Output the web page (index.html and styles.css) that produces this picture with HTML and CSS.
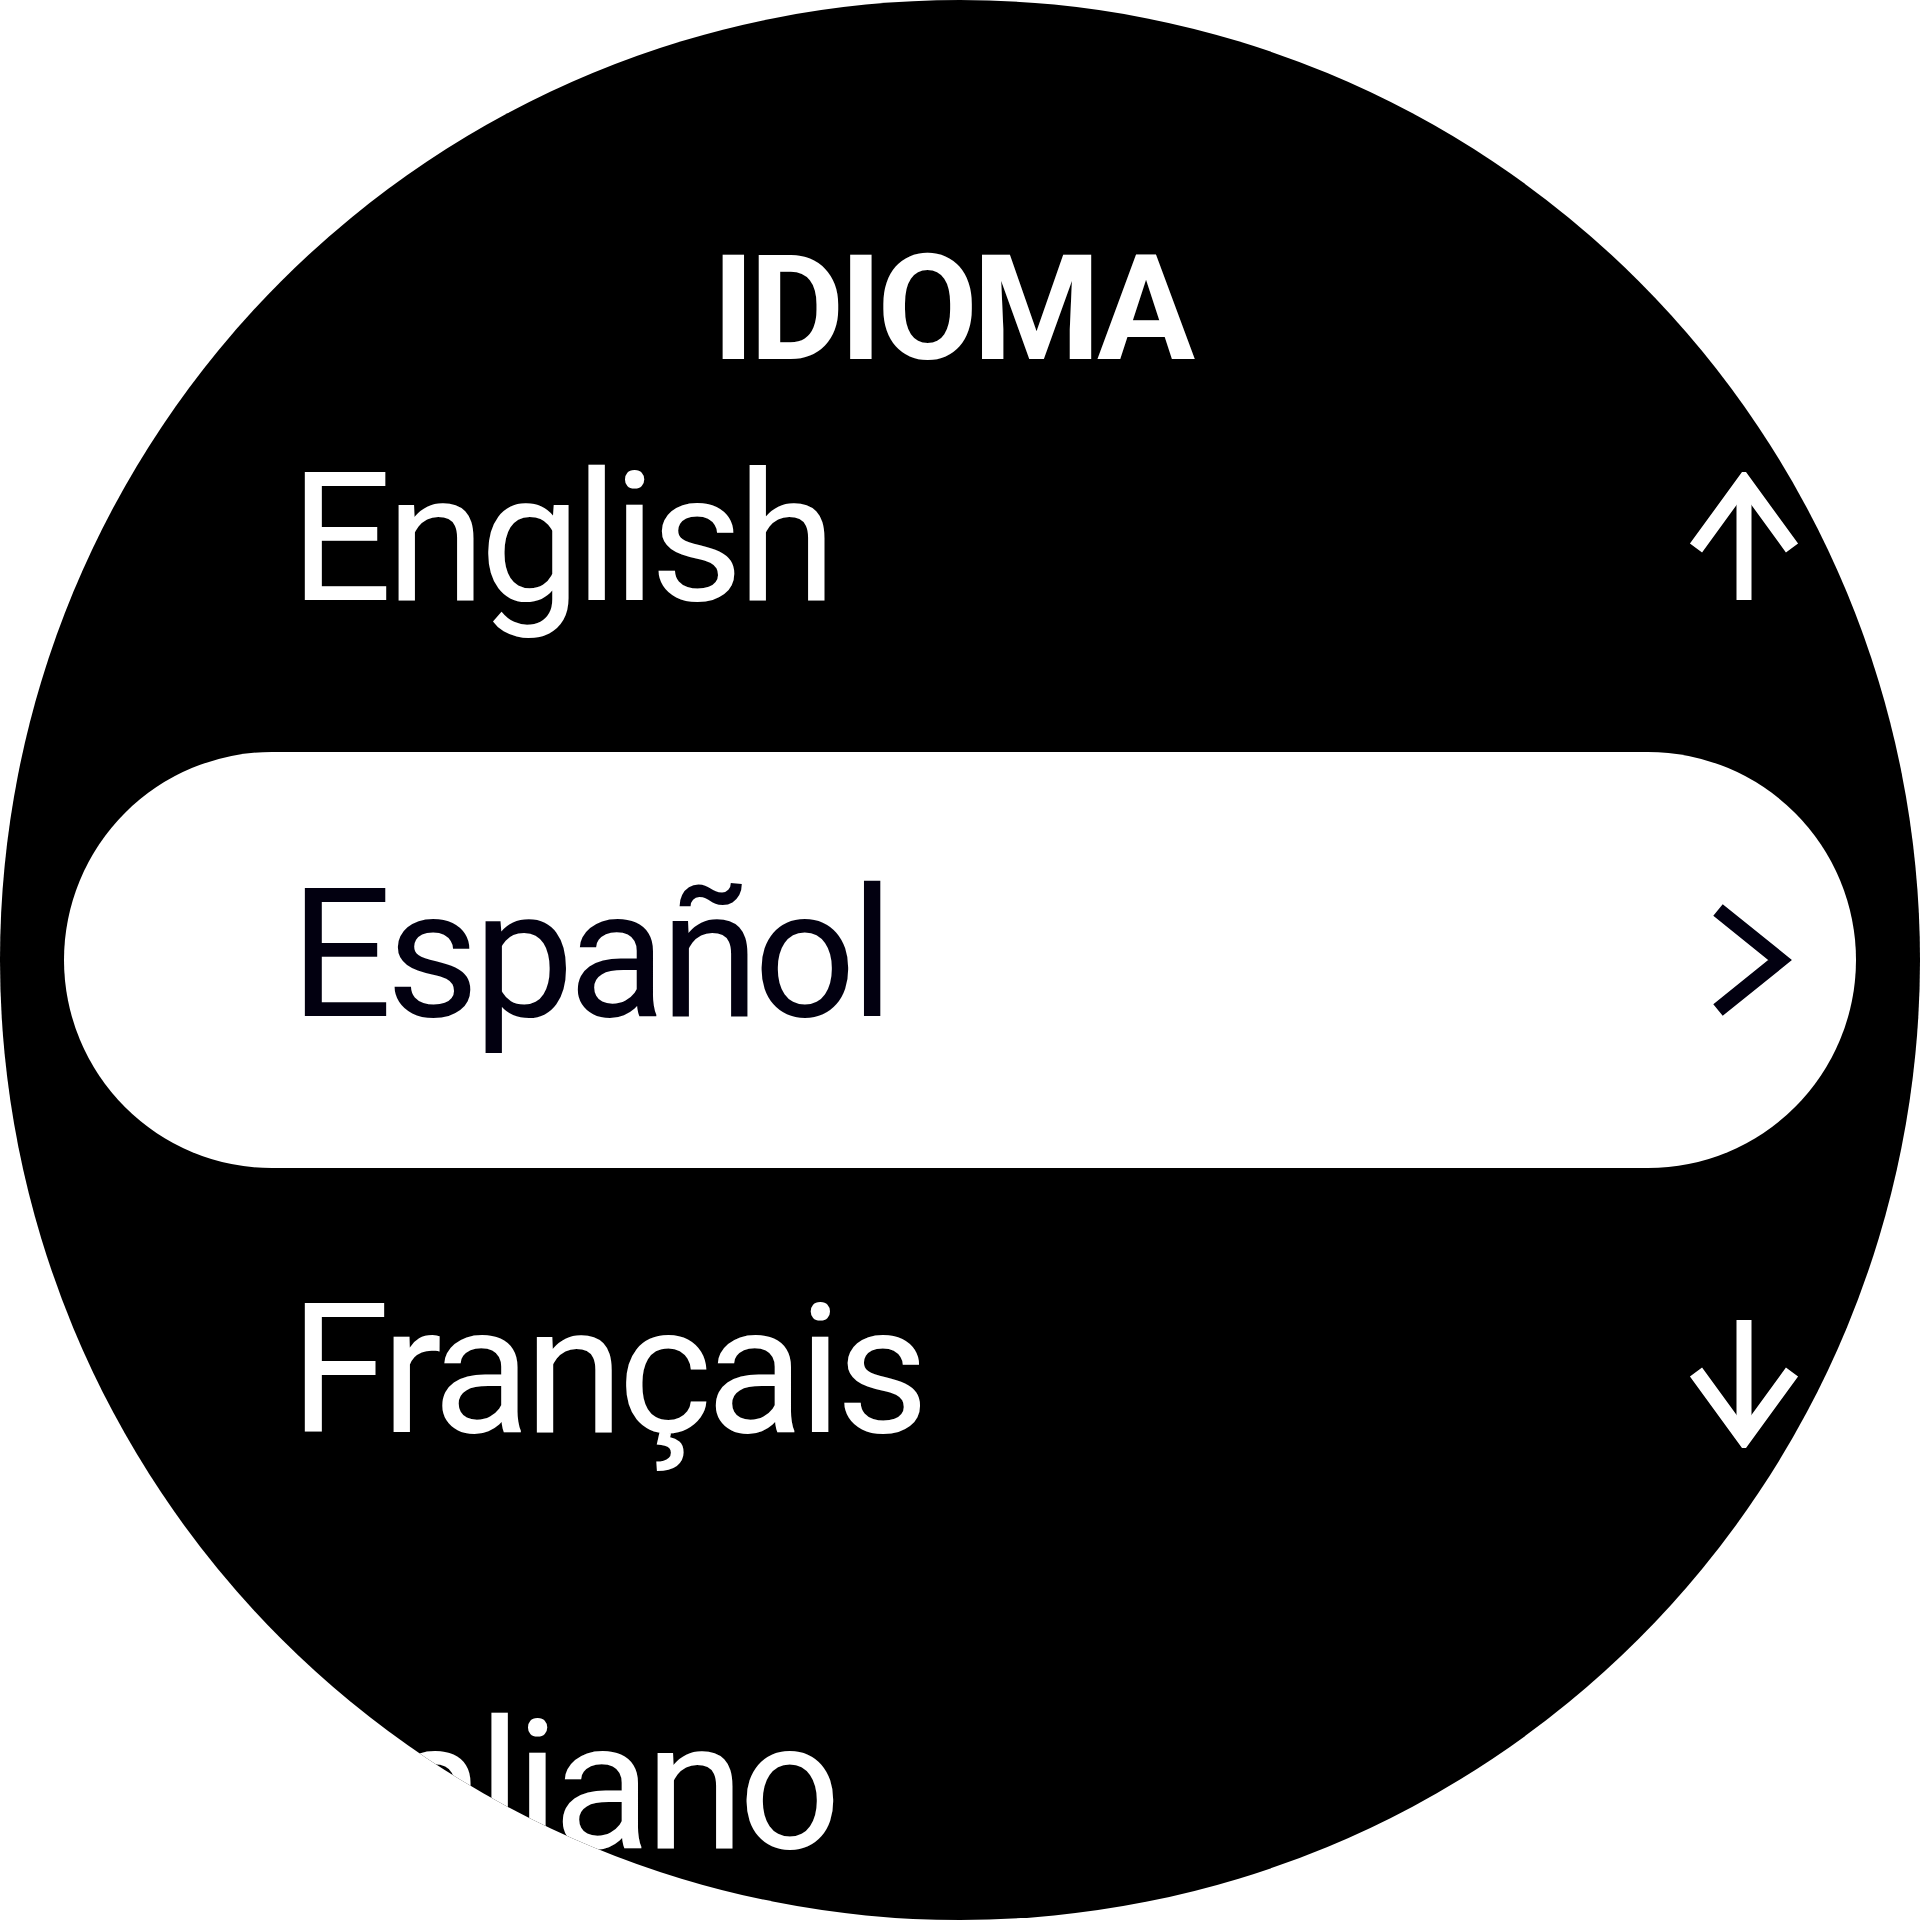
FILE: index.html
```html
<!DOCTYPE html>
<html lang="es">
<head>
<meta charset="utf-8">
<title>Idioma</title>
<link rel="stylesheet" href="styles.css">
</head>
<body>
<div class="watch">
  <header class="header"><h1 class="title">IDIOMA</h1></header>
  <ul class="list">
    <li class="row">
      <span class="label">English</span>
      <svg class="icon icon-up" viewBox="0 0 112 128" width="112" height="128" aria-hidden="true">
        <path d="M56 128 V10" />
        <path d="M8 76 L56 10 L104 76" />
      </svg>
    </li>
    <li class="row row-selected">
      <span class="label">Español</span>
      <svg class="icon icon-chevron" viewBox="0 0 112 128" width="112" height="128" aria-hidden="true">
        <path d="M30 14 L92 64 L30 114" />
      </svg>
    </li>
    <li class="row">
      <span class="label">Français</span>
      <svg class="icon icon-down" viewBox="0 0 112 128" width="112" height="128" aria-hidden="true">
        <path d="M56 0 V118" />
        <path d="M8 52 L56 118 L104 52" />
      </svg>
    </li>
    <li class="row">
      <span class="label">Italiano</span>
    </li>
  </ul>
</div>
</body>
</html>
```
FILE: styles.css
```css
html, body {
  margin: 0;
  padding: 0;
  background: #ffffff;
}

.watch {
  width: 1920px;
  height: 1920px;
  border-radius: 50%;
  background: #000000;
  overflow: hidden;
  display: flex;
  flex-direction: column;
  align-items: center;
}

.header {
  width: 100%;
  height: 336px;
  box-sizing: border-box;
  padding-top: 285px;
  display: flex;
  justify-content: center;
  flex-shrink: 0;
}

.title {
  margin: 0 18px 0 0;
  font-family: Roboto, "Liberation Sans", sans-serif;
  font-weight: 700;
  font-size: 146px;
  line-height: 50px;
  letter-spacing: -5px;
  color: #ffffff;
}

.list {
  width: 1792px;
  margin: 0;
  padding: 0;
  list-style: none;
  flex-shrink: 0;
}

.row {
  height: 416px;
  box-sizing: border-box;
  padding: 0 56px 0 226px;
  display: flex;
  align-items: center;
  justify-content: space-between;
  color: #ffffff;
}

.row-selected {
  background: #ffffff;
  border-radius: 208px;
  color: #020010;
}

.label {
  font-family: Roboto, "Liberation Sans", sans-serif;
  font-weight: 400;
  font-size: 180px;
  letter-spacing: -6px;
  margin-bottom: 11px;
}

.icon {
  flex-shrink: 0;
  fill: none;
  stroke: currentColor;
  stroke-width: 15;
}

.icon-up {
  margin-bottom: 16px;
}

.icon-down {
  margin-top: 16px;
}
```
